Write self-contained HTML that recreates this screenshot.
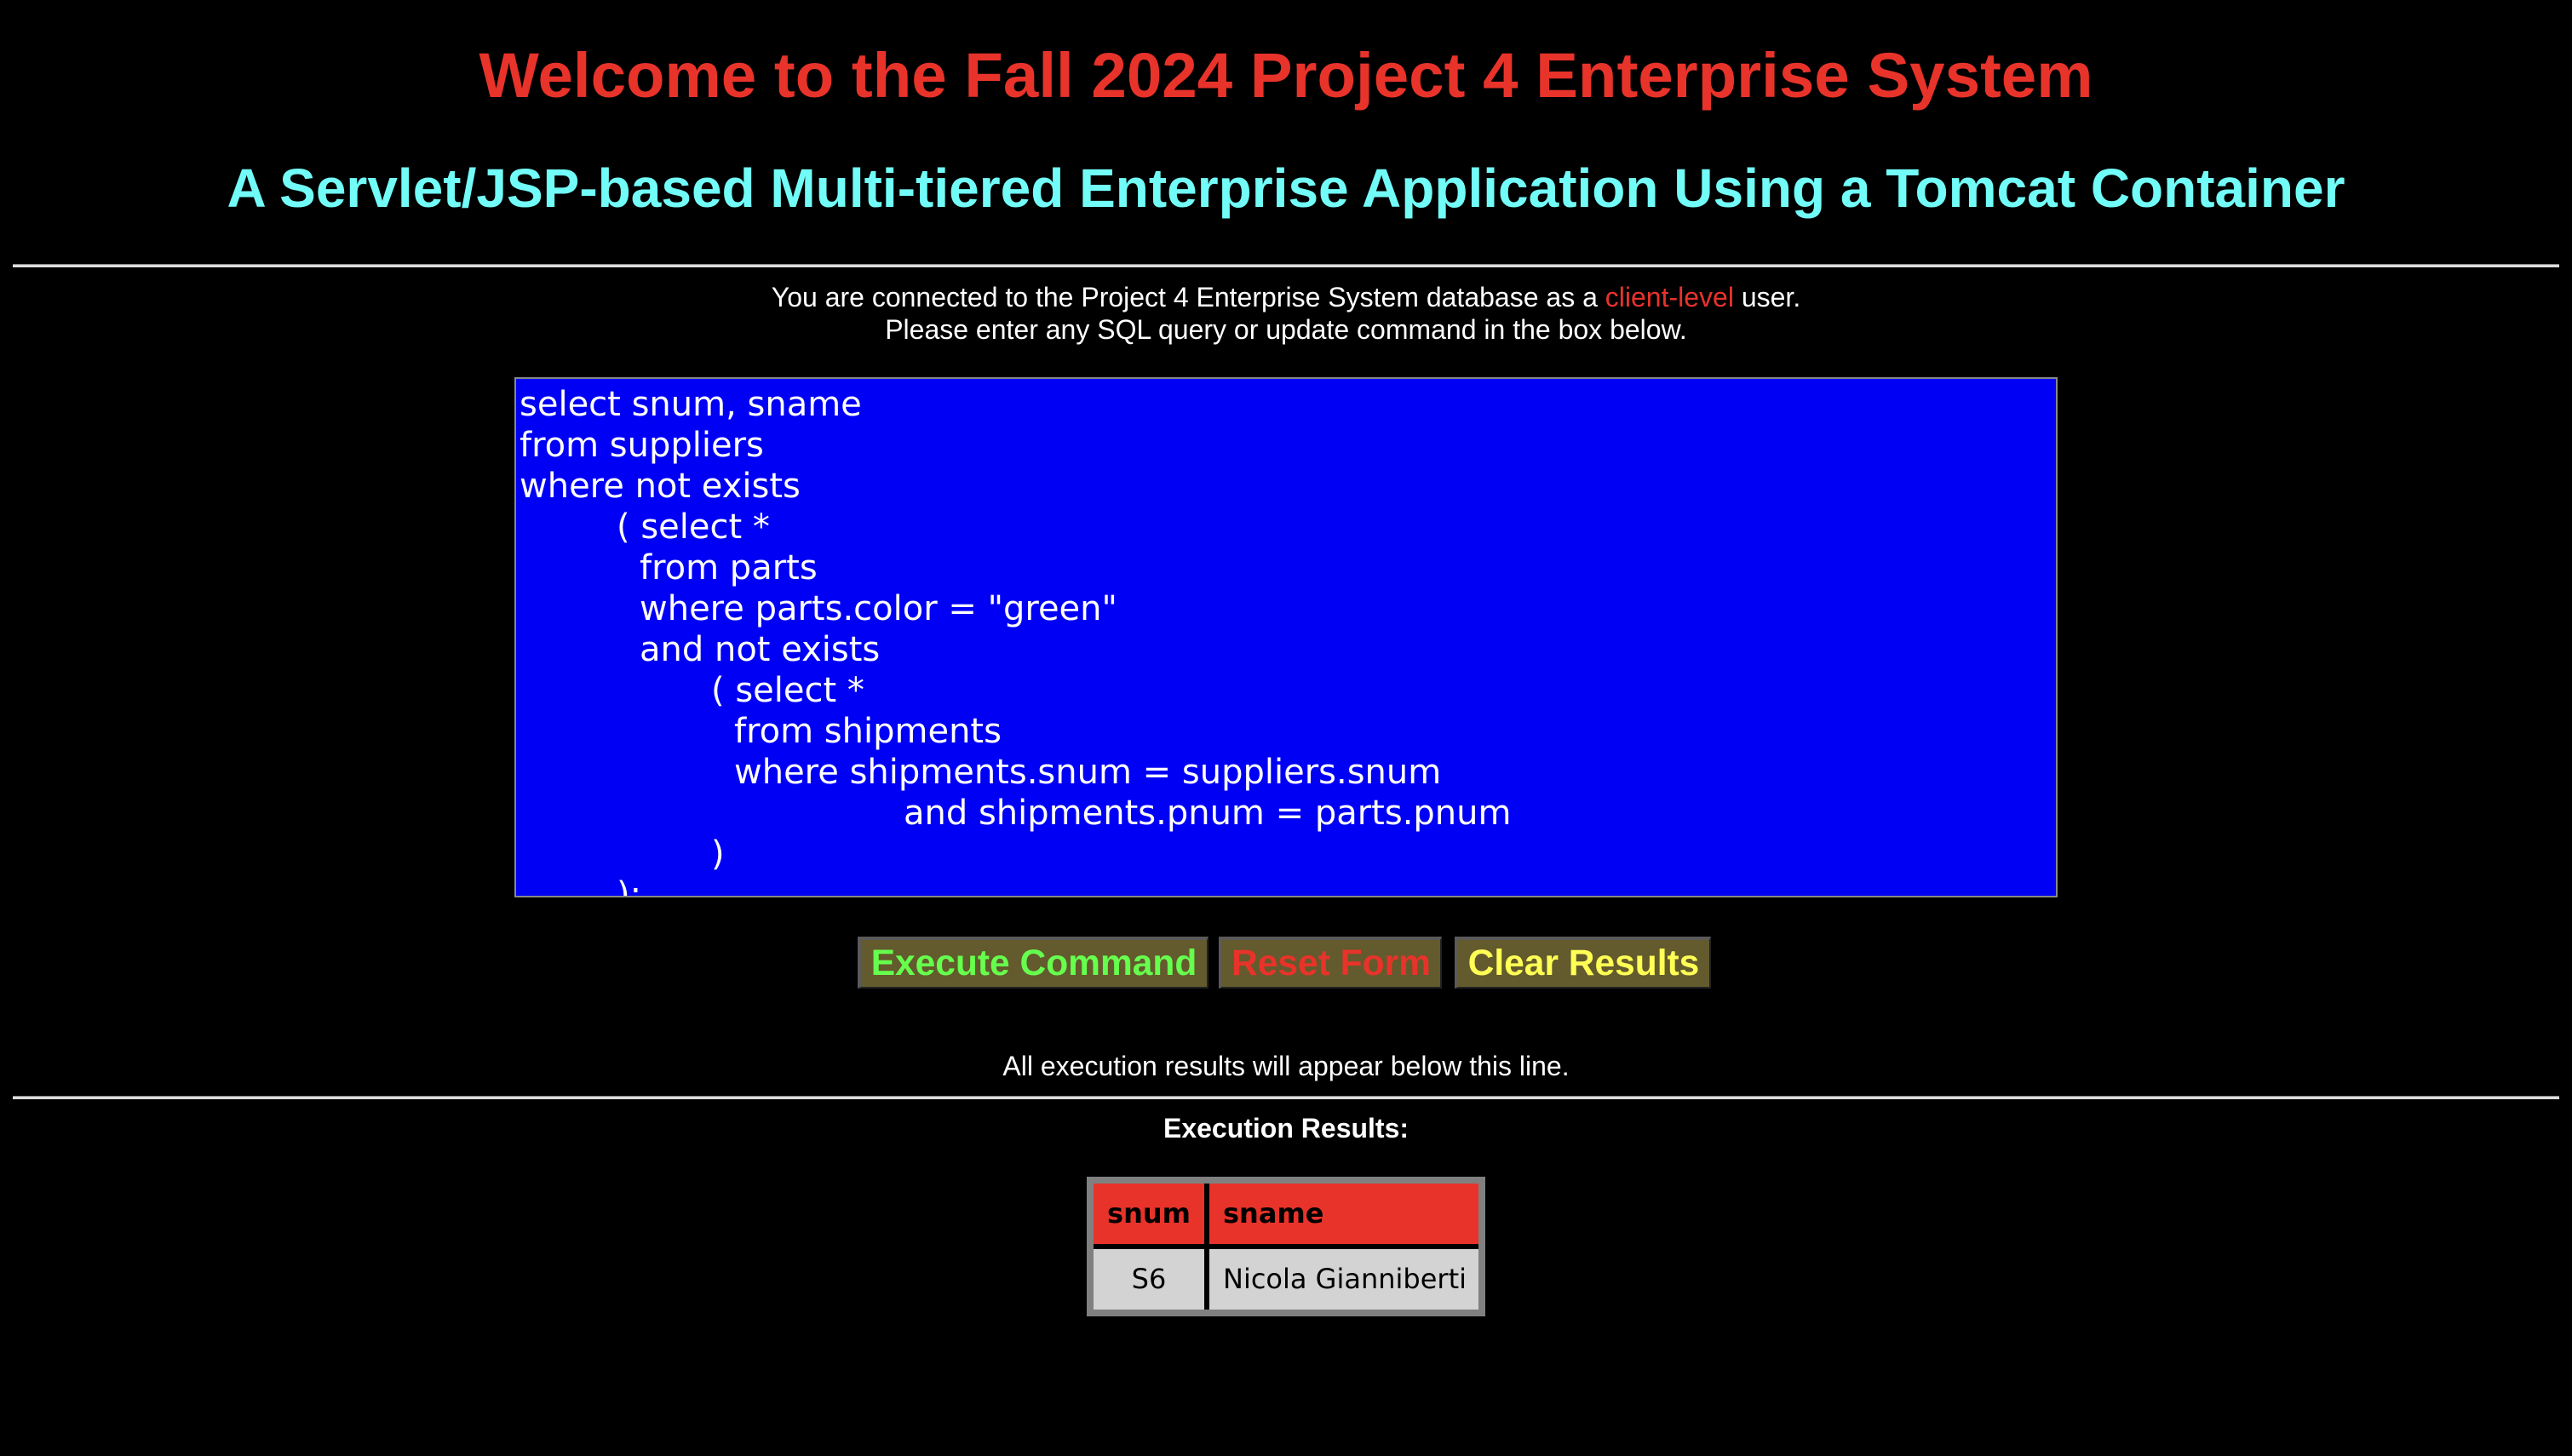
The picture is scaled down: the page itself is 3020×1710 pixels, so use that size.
<!DOCTYPE html>
<html><head><meta charset="utf-8"><style>
html,body{margin:0;padding:0;background:#000;width:3020px;height:1710px;overflow:hidden;position:relative;font-family:"Liberation Sans",Arial,sans-serif;}
.a{position:absolute;white-space:nowrap;}
.c{left:0;width:3020px;text-align:center;}
.hr{position:absolute;left:15px;width:2990px;height:3px;background:#ddd;border-top:1px solid #888;}
.ta{position:absolute;left:604px;top:443px;width:1804px;height:601px;padding:6px 0 0 4px;background:#0000f5;border:2px solid #888;overflow:hidden;font-family:"DejaVu Sans",sans-serif;font-size:40px;color:#fff;}
.ta div{height:48px;line-height:48px;white-space:pre;}
.btn{position:absolute;top:1100px;height:55px;background:#635a2d;border-top:4px solid #5a5a5a;border-left:4px solid #5a5a5a;border-bottom:2px solid #222;border-right:2px solid #222;font-weight:bold;font-size:42.5px;line-height:55px;text-align:center;white-space:nowrap;}
.cell{position:absolute;font-family:"DejaVu Sans",sans-serif;font-size:32px;}
</style></head><body>
<div class="a c" style="top:44px;font-size:74.5px;font-weight:bold;color:#e8332a;line-height:90px;">Welcome to the Fall 2024 Project 4 Enterprise System</div>
<div class="a c" style="top:186px;font-size:64px;font-weight:bold;color:#72fcf8;line-height:70px;">A Servlet/JSP-based Multi-tiered Enterprise Application Using a Tomcat Container</div>
<div class="hr" style="top:310px"></div>
<div class="a c" style="top:330px;font-size:32px;color:#fff;line-height:38px;">You are connected to the Project 4 Enterprise System database as a <span style="color:#e8332a">client-level</span> user.</div>
<div class="a c" style="top:368px;font-size:32px;color:#fff;line-height:38px;">Please enter any SQL query or update command in the box below.</div>
<div class="ta"><div>select snum, sname</div><div>from suppliers</div><div>where not exists</div><div style="padding-left:114px">( select *</div><div style="padding-left:141px">from parts</div><div style="padding-left:141px">where parts.color = "green"</div><div style="padding-left:141px">and not exists</div><div style="padding-left:225px">( select *</div><div style="padding-left:252px">from shipments</div><div style="padding-left:252px">where shipments.snum = suppliers.snum</div><div style="padding-left:451px">and shipments.pnum = parts.pnum</div><div style="padding-left:225px">)</div><div style="padding-left:114px">);</div></div>
<div class="btn" style="left:1007px;width:406px;color:#66ff4d;">Execute Command</div>
<div class="btn" style="left:1431px;width:256px;color:#e8332a;">Reset Form</div>
<div class="btn" style="left:1708px;width:295px;color:#ffff55;">Clear Results</div>
<div class="a c" style="top:1233px;font-size:32px;color:#fff;line-height:38px;">All execution results will appear below this line.</div>
<div class="hr" style="top:1287px"></div>
<div class="a c" style="top:1306px;font-size:32px;font-weight:bold;color:#fff;line-height:38px;">Execution Results:</div>
<div class="a" style="left:1276px;top:1382px;width:468px;height:164px;background:#808080;"></div>
<div class="a" style="left:1284px;top:1390px;width:452px;height:148px;background:#000;"></div>
<div class="a" style="left:1284px;top:1390px;width:130px;height:71px;background:#e8332a;"></div>
<div class="a" style="left:1420px;top:1390px;width:316px;height:71px;background:#e8332a;"></div>
<div class="a" style="left:1284px;top:1467px;width:130px;height:71px;background:#d3d3d3;"></div>
<div class="a" style="left:1420px;top:1467px;width:316px;height:71px;background:#d3d3d3;"></div>
<div class="cell" style="left:1284px;width:130px;top:1390px;line-height:71px;text-align:center;font-weight:bold;">snum</div>
<div class="cell" style="left:1436px;top:1390px;line-height:71px;font-weight:bold;">sname</div>
<div class="cell" style="left:1284px;width:130px;top:1467px;line-height:71px;text-align:center;">S6</div>
<div class="cell" style="left:1436px;top:1467px;line-height:71px;white-space:nowrap;">Nicola Gianniberti</div>
</body></html>
